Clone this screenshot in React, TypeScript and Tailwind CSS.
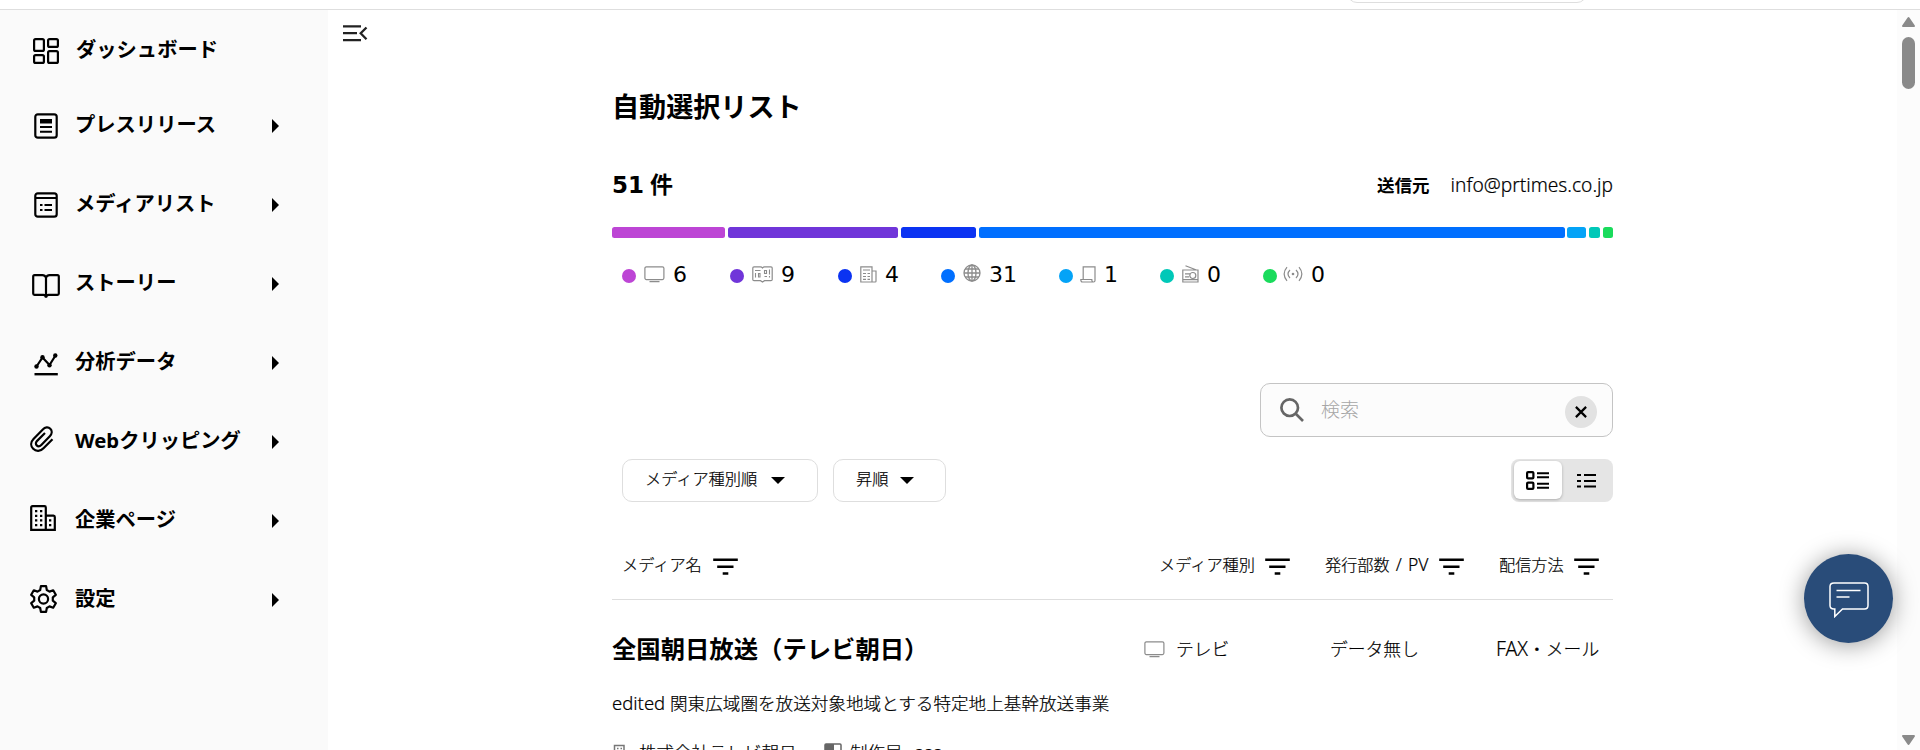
import React from "react";

type P = { children?: React.ReactNode };

const Svg = ({ w, h, vb, cls = "", children }: P & { w: number; h: number; vb?: string; cls?: string }) => (
  <svg width={w} height={h} viewBox={vb ?? `0 0 ${w} ${h}`} fill="none" className={"shrink-0 " + cls}>
    {children}
  </svg>
);

const DashboardIcon = () => (
  <Svg w={26} h={26} cls="mt-[3px] ml-[33px]">
    <g stroke="#000" strokeWidth="2.200">
      <rect x="1.100" y="1.100" width="9.800" height="11.800" rx="1.500" />
      <rect x="15.100" y="1.100" width="9.800" height="7.800" rx="1.500" />
      <rect x="1.100" y="17.100" width="9.800" height="7.800" rx="1.500" />
      <rect x="15.100" y="13.100" width="9.800" height="11.800" rx="1.500" />
    </g>
  </Svg>
);
const PressIcon = () => (
  <Svg w={24} h={26} cls="-mt-0.5 ml-[34px]">
    <rect x="1.300" y="1.300" width="21.400" height="23.400" rx="2.500" stroke="#000" strokeWidth="2.200" />
    <path d="M6 6h12v4.500H6zM6 13h12v2H6zM6 17.700h12v2H6z" fill="#000" />
  </Svg>
);
const MediaIcon = () => (
  <Svg w={24} h={26} cls="-mt-0.5 ml-[34px]">
    <rect x="1.300" y="1.300" width="21.400" height="23.400" rx="2.500" stroke="#000" strokeWidth="2.200" />
    <path d="M1 5h22v2H1zM6 12h2.500v2H6zM10.500 12H18v2h-7.500zM6 17h2.500v2H6zM10.500 17H18v2h-7.500z" fill="#000" />
  </Svg>
);
const BookIcon = () => (
  <Svg w={28} h={25} cls="mt-1 ml-8">
    <path
      d="M14 3.500C13.300 2 12 1.200 10.500 1.200H2.500Q1.200 1.200 1.200 2.500V19.500Q1.200 20.800 2.500 20.800H11.500Q13.500 20.800 14 23.500Q14.500 20.800 16.500 20.800H25.500Q26.800 20.800 26.800 19.500V2.500Q26.800 1.200 25.500 1.200H17.500C16 1.200 14.700 2 14 3.500ZM14 3.500V23"
      stroke="#000"
      strokeWidth="2.200"
    />
  </Svg>
);
const ChartIcon = () => (
  <Svg w={24} h={23} cls="mt-[2px] ml-[34px]">
    <path d="M2.500 13.500L8.500 4.500L15.500 12L21.500 2.500" stroke="#000" strokeWidth="2.200" />
    <circle cx="2.500" cy="13.500" r="2.200" fill="#000" />
    <circle cx="8.500" cy="4.200" r="2.200" fill="#000" />
    <circle cx="15.500" cy="12.200" r="2.200" fill="#000" />
    <circle cx="21.300" cy="2.500" r="2.200" fill="#000" />
    <path d="M.5 21.200H23.800" stroke="#000" strokeWidth="2.400" />
  </Svg>
);
const ClipIcon = () => (
  <Svg w={24} h={26} cls="-mt-[7px] ml-[30px]">
    <path
      d="M22.500 13.200L13.500 22.200C10.500 25.500 6 25.600 3.200 22.800C.4 20 .6 16 3.500 13L12.800 3.400C15 1.100 18.300.7 20.300 2.700C22.400 4.800 22 8 19.800 10.300L11.300 19C9.800 20.500 7.900 20.600 6.700 19.400C5.500 18.200 5.700 16.300 7.100 14.900L15 7"
      stroke="#000"
      strokeWidth="2.200"
    />
  </Svg>
);
const BuildingIcon = () => (
  <Svg w={26} h={26} cls="-mt-[7px] ml-[30px]">
    <path
      d="M1.200 24.800V2.500Q1.200 1.200 2.500 1.200H14.500Q15.800 1.200 15.800 2.500V24.800ZM15.800 10.600H23.500Q24.800 10.600 24.800 12V24.800H15.800"
      stroke="#000"
      strokeWidth="2.200"
    />
    <path
      d="M5 5h2.300v2.300H5zM10 5h2.300v2.300H10zM5 9.700h2.300V12H5zM10 9.700h2.300V12H10zM5 14.300h2.300v2.300H5zM10 14.300h2.300v2.300H10zM5 19h2.300v2.300H5zM10 19h2.300v2.300H10zM19 14.300h2.300v2.300H19zM19 19h2.300v2.300H19z"
      fill="#000"
    />
  </Svg>
);
const GearIcon = () => (
  <Svg w={27} h={28} cls="-mt-1 ml-[30px]">
    <path
      d="M10.900 1.100h5.200l.7 3.900 2.700 1.600 3.700-1.300 2.600 4.500-3 2.500v3.400l3 2.500-2.600 4.500-3.700-1.300-2.700 1.600-.7 3.900h-5.200l-.7-3.900-2.700-1.600-3.700 1.300-2.600-4.500 3-2.500v-3.400l-3-2.500 2.600-4.500 3.700 1.300 2.700-1.600z"
      stroke="#000"
      strokeWidth="2.200"
      strokeLinejoin="round"
    />
    <circle cx="13.500" cy="14" r="4.600" stroke="#000" strokeWidth="2.200" />
  </Svg>
);

const TvIcon = () => (
  <Svg w={21} h={17}>
    <rect x=".9" y=".8" width="19" height="12.800" rx="1.500" stroke="#8c8c8c" strokeWidth="1.200" />
    <path d="M5.500 15.600h10" stroke="#8c8c8c" strokeWidth="1.300" />
  </Svg>
);
const MagazineIcon = () => (
  <Svg w={21} h={17}>
    <path
      d="M10.500 2Q9.700.8 8.500.8H2Q.8.8.8 2V13.500Q.8 14.700 2 14.700H8.500L10.500 16L12.500 14.700H19Q20.200 14.700 20.200 13.500V2Q20.200.8 19 .8H12.500Q11.300.8 10.500 2Z"
      stroke="#8c8c8c"
      strokeWidth="1.200"
    />
    <path d="M3 4.500h5.500M3.500 7v4.500M6.500 7.500h1.500v3.500h-1.500zM12.500 4.500h2v3h-2zM17.500 3.500v5M12.500 10.500h2.500M17.500 10v1.500" stroke="#8c8c8c" strokeWidth="1.100" />
  </Svg>
);
const NewspaperIcon = () => (
  <Svg w={17} h={17}>
    <path d="M.8.8H12V16H.8zM12 5h4v10.200q0 .8-.8.8H12" stroke="#8c8c8c" strokeWidth="1.200" />
    <path d="M3 4h7M3 7.500h3M7.500 7.500H10M3 10.500h3M7.500 10.500H10M3 13.300h3M7.500 13.300H10" stroke="#8c8c8c" strokeWidth="1.200" />
  </Svg>
);
const GlobeIcon = () => (
  <Svg w={18} h={18} cls="-mt-[3px]">
    <g stroke="#8c8c8c" strokeWidth="1.300">
      <circle cx="9" cy="9" r="8" />
      <ellipse cx="9" cy="9" rx="4" ry="8" />
      <path d="M9 1v16M1 9h16M2 5h14M2 13h14" />
    </g>
  </Svg>
);
const ScrollIcon = () => (
  <Svg w={16} h={17} cls="-ml-px">
    <path d="M3.200 13V.8H15V14.500Q15 16 13.500 16H2.500Q.8 16 .8 13.500H11.800Q11.800 16 13.300 16" stroke="#8c8c8c" strokeWidth="1.200" />
  </Svg>
);
const RadioIcon = () => (
  <Svg w={17} h={18} cls="-mt-px">
    <path d="M.8 5H16v12H.8zM3.500.8L14.500 5M3 8.800h5M3 11.800h4M.8 14.700H16" stroke="#8c8c8c" strokeWidth="1.200" />
    <circle cx="10.800" cy="10.500" r="3" stroke="#8c8c8c" strokeWidth="1.200" fill="#fff" />
  </Svg>
);
const SignalIcon = () => (
  <Svg w={20} h={16} cls="-ml-[2px]">
    <path d="M4 1.200Q-1.700 8 4 14.800M16 1.200Q21.700 8 16 14.800M7 4Q3 8 7 12M13 4Q17 8 13 12" stroke="#8c8c8c" strokeWidth="1.200" />
    <circle cx="10" cy="8" r="1.300" fill="#8c8c8c" />
  </Svg>
);
const FilterIcon = () => (
  <Svg w={25} h={17} cls="mt-[3px]">
    <path d="M.2 1.700H24.800M4.200 8.700H20.500M9.700 15.400H15.300" stroke="#000" strokeWidth="2.500" />
  </Svg>
);
const Caret = ({ cls }: { cls: string }) => (
  <Svg w={14} h={7} cls={cls}>
    <path d="M0 0H14L7 7z" fill="#000" />
  </Svg>
);

const nav = [
  { label: "ダッシュボード", Icon: DashboardIcon, gap: "ml-[17px]", arrow: false },
  { label: "プレスリリース", Icon: PressIcon, gap: "ml-[17px]", arrow: true },
  { label: "メディアリスト", Icon: MediaIcon, gap: "ml-[17px]", arrow: true },
  { label: "ストーリー", Icon: BookIcon, gap: "ml-[15px]", arrow: true },
  { label: "分析データ", Icon: ChartIcon, gap: "ml-[17px]", arrow: true },
  { label: "Webクリッピング", Icon: ClipIcon, gap: "ml-[21px]", arrow: true },
  { label: "企業ページ", Icon: BuildingIcon, gap: "ml-[19px]", arrow: true },
  { label: "設定", Icon: GearIcon, gap: "ml-[18px]", arrow: true },
];

const bars = [
  "w-[113px] mr-[3px] bg-[#bd45d5]",
  "w-[170px] mr-[3px] bg-[#7035d9]",
  "w-[75px] mr-[3px] bg-[#0b33f2]",
  "w-[586px] mr-[2px] bg-[#006fff]",
  "w-[19px] mr-[3px] bg-[#04a3f7]",
  "w-[11px] mr-[3px] bg-[#00c8b8]",
  "w-[10px] bg-[#1adb5c]",
];

const counts = [
  { n: "6", Icon: TvIcon, w: "w-[108px]", dot: "bg-[#bd45d5]" },
  { n: "9", Icon: MagazineIcon, w: "w-[108px]", dot: "bg-[#7035d9]" },
  { n: "4", Icon: NewspaperIcon, w: "w-[103px]", dot: "bg-[#0b33f2]" },
  { n: "31", Icon: GlobeIcon, w: "w-[118px]", dot: "bg-[#006fff]" },
  { n: "1", Icon: ScrollIcon, w: "w-[101px]", dot: "bg-[#04a3f7]" },
  { n: "0", Icon: RadioIcon, w: "w-[103px]", dot: "bg-[#00c8b8]" },
  { n: "0", Icon: SignalIcon, w: "w-[100px]", dot: "bg-[#1adb5c]" },
];

export default function App() {
  return (
    <div
      lang="ja"
      className="relative flex h-[750px] w-[1920px] flex-col overflow-hidden bg-white text-black [font-family:'Noto_Sans','Noto_Sans_CJK_JP',sans-serif] whitespace-nowrap"
    >
      <header className="flex h-[10px] shrink-0 items-start overflow-hidden border-b border-[#dedede]">
        <div className="-mt-[47px] ml-[1347px] h-[50px] w-[240px] shrink-0 rounded-[10px] border border-[#dedede]" />
      </header>
      <div className="flex min-h-0 flex-1">
        <aside className="w-[328px] shrink-0 bg-[#fafafa]">
          <nav className="flex flex-col pt-[2px]">
            {nav.map(({ label, Icon, gap, arrow }, i) => (
              <a key={label} className={"flex items-center " + (i === 0 ? "h-[75px]" : "h-[79px]")}>
                <Icon />
                <span className={"w-[179px] text-[20.300px] leading-[30px] font-bold " + gap + (i === 0 ? " -mt-0.5" : " -mt-[5px]")}>{label}</span>
                {arrow && (
                  <Svg w={7} h={14} cls="-mt-px ml-[18px]">
                    <path d="M0 0L7 7L0 14z" fill="#000" />
                  </Svg>
                )}
              </a>
            ))}
          </nav>
        </aside>
        <div className="w-[284px] shrink-0 pt-[15px] pl-[15px]">
          <Svg w={25} h={17}>
            <path d="M0 1.300H18M0 8.200H14M0 15.200H18M23.500 2.500L17.700 8.300L23.500 14.200" stroke="#222" strokeWidth="2.300" />
          </Svg>
        </div>
        <main className="w-[1001px] shrink-0 overflow-hidden">
          <h1 className="mt-[77px] h-10 text-[27.100px] leading-10 font-bold">自動選択リスト</h1>
          <div className="mt-[38px] flex h-10 items-center justify-between">
            <div className="text-[23px] leading-10 font-bold [font-family:'DejaVu_Sans','Noto_Sans_CJK_JP',sans-serif]">
              51<span className="ml-[6px]">件</span>
            </div>
            <div className="flex items-center text-[17.500px] leading-10">
              <b>送信元</b>
              <span className="ml-[21px] text-[19.150px] font-light [-webkit-text-stroke:0.2px_#000]">info@prtimes.co.jp</span>
            </div>
          </div>
          <div className="mt-[22px] flex h-[11px]">
            {bars.map((c) => (
              <div key={c} className={"h-full shrink-0 rounded-[2.500px] " + c} />
            ))}
          </div>
          <div className="mt-4 flex h-10 items-center pl-[10px]">
            {counts.map(({ n, Icon, w, dot }) => (
              <div key={w + dot} className={"flex items-center " + w}>
                <i className={"mt-[3px] mr-2 size-[14px] shrink-0 rounded-full " + dot} />
                <Icon />
                <span className="mt-px ml-2 text-[22px] leading-10 [font-family:'DejaVu_Sans',sans-serif]">{n}</span>
              </div>
            ))}
          </div>
          <div className="mt-[89px] ml-[648px] flex h-[54px] w-[353px] items-center rounded-[10px] border border-[#c4c4c4] bg-[#fcfcfc] pl-[19px]">
            <Svg w={24} h={24}>
              <circle cx="9.700" cy="9.700" r="8.300" stroke="#666" strokeWidth="2.700" />
              <path d="M15.500 15.500L23 23" stroke="#666" strokeWidth="2.700" />
            </Svg>
            <span className="ml-[17px] w-[244px] text-[19px] leading-7 font-light text-[#a6a6a6]">検索</span>
            <button className="mt-[3px] flex size-8 items-center justify-center rounded-full bg-[#e2e2e2]">
              <Svg w={12} h={12}>
                <path d="M.9.9L11.100 11.100M11.100.9L.9 11.100" stroke="#000" strokeWidth="2.200" />
              </Svg>
            </button>
          </div>
          <div className="mt-[22px] flex h-[43px] pl-[10px] text-base">
            <button className="flex w-[196px] items-center rounded-[10px] border border-[#dedede] pb-[3px] pl-[22px] text-[16.200px] font-light [-webkit-text-stroke:0.2px_#000]">
              メディア種別順
              <Caret cls="mt-[3px] ml-[14px]" />
            </button>
            <button className="ml-[15px] flex w-[113px] items-center rounded-[10px] border border-[#dedede] pb-[3px] pl-[22px] text-[16.200px] font-light [-webkit-text-stroke:0.2px_#000]">
              昇順
              <Caret cls="mt-[3px] ml-3" />
            </button>
            <div className="ml-auto flex w-[102px] items-center rounded-[8px] bg-[#e5e5e5] pl-[3px]">
              <div className="mb-px flex h-[38px] w-12 items-center justify-center rounded-[6px] bg-white pr-0.5 shadow-[0_1px_3px_rgba(0,0,0,0.25)]">
                <Svg w={23} h={19}>
                  <rect x="1.100" y="1.100" width="6.300" height="6.300" rx="1" stroke="#000" strokeWidth="2.200" />
                  <rect x="1.100" y="11.600" width="6.300" height="6.300" rx="1" stroke="#000" strokeWidth="2.200" />
                  <path d="M11 2.300h12M11 6.300h12M11 12.800h12M11 16.800h12" stroke="#000" strokeWidth="1.900" />
                </Svg>
              </div>
              <Svg w={19} h={16} cls="ml-[15px]">
                <path d="M0 2h4M7 2h12M0 8h4M7 8h12M0 13.500h4M7 13.500h12" stroke="#000" strokeWidth="2.200" />
              </Svg>
            </div>
          </div>
          <div className="mt-[31px] flex h-[67px] items-center border-b border-[#dedede] pb-[3px] pl-[10px] text-[16.200px] leading-8 font-light [-webkit-text-stroke:0.2px_#000]">
            <span className="w-[91px]">メディア名</span>
            <FilterIcon />
            <span className="ml-[421px] w-[106px]">メディア種別</span>
            <FilterIcon />
            <span className="ml-[35px] w-[114px]">
              発行部数<span className="text-[17.500px] [word-spacing:1.500px]"> / PV</span>
            </span>
            <FilterIcon />
            <span className="ml-[35px] w-[75px]">配信方法</span>
            <FilterIcon />
          </div>
          <div className="mt-[29px] flex h-10 items-center text-[17.800px] leading-10 font-light">
            <h2 className="w-[532px] text-[24.350px] font-bold">全国朝日放送（テレビ朝日）</h2>
            <TvIcon />
            <span className="ml-[11px] w-[154px] [-webkit-text-stroke:0.2px_#000]">テレビ</span>
            <span className="w-[166px] [-webkit-text-stroke:0.2px_#000]">データ無し</span>
            <span className="[-webkit-text-stroke:0.2px_#000]">
              <span className="text-[19.500px]">FAX</span>・メール
            </span>
          </div>
          <p className="mt-[14px] h-10 text-[17.600px] leading-10 font-light [-webkit-text-stroke:0.2px_#000]">
            <span className="text-[18.500px]">edited </span>関東広域圏を放送対象地域とする特定地上基幹放送事業
          </p>
          <div className="mt-[9px] flex h-10 items-center text-[17.500px] leading-10 font-light [-webkit-text-stroke:0.2px_#000]">
            <Svg w={16} h={17} cls="ml-px">
              <path d="M1.500 17V1.500H11V17M11 8h4v9" stroke="#777" strokeWidth="1.500" />
              <path d="M4 4.500h1.500M7.500 4.500H9" stroke="#777" strokeWidth="1.500" />
            </Svg>
            <span className="ml-[10px] w-[185px]">株式会社テレビ朝日</span>
            <Svg w={18} h={18}>
              <rect x="1" y="1" width="16" height="16" rx="1" stroke="#666" strokeWidth="1.500" />
              <path d="M1 1h9v16H1z" fill="#666" />
            </Svg>
            <span className="ml-2">制作局</span>
            <span className="ml-3">aaa</span>
          </div>
        </main>
        <div className="ml-auto flex w-[23px] shrink-0 flex-col items-center bg-[#fcfcfc] pt-[6px] pb-1">
          <Svg w={15} h={12}>
            <path d="M7.500 2L13 10H2z" fill="#8a8a8a" stroke="#8a8a8a" strokeWidth="2" strokeLinejoin="round" />
          </Svg>
          <div className="mt-[9px] h-[52px] w-[13px] rounded-full bg-[#8a8a8a]" />
          <Svg w={15} h={12} cls="mt-auto">
            <path d="M7.500 10L13 2H2z" fill="#8a8a8a" stroke="#8a8a8a" strokeWidth="2" strokeLinejoin="round" />
          </Svg>
        </div>
      </div>
      <button className="absolute top-[554px] left-[1804px] flex size-[89px] items-center justify-center rounded-full bg-[#294c79] pt-[3px] shadow-[0_2px_24px_rgba(0,0,0,0.4)]">
        <Svg w={40} h={36}>
          <path
            d="M5 1H35.500Q39 1 39 4.500V23.500Q39 27 35.500 27H13.500L5.800 34.500V27H5Q1 27 1 23.500V4.500Q1 1 5 1Z"
            stroke="#fff"
            strokeWidth="1.500"
          />
          <path d="M7.500 8.500h24M7.500 15h13" stroke="#fff" strokeWidth="1.500" />
        </Svg>
      </button>
    </div>
  );
}
